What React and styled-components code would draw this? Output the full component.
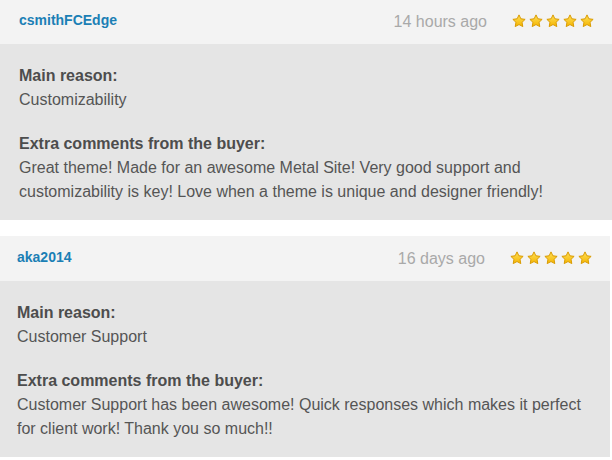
import React from "react";
import styled, { createGlobalStyle } from "styled-components";

const GlobalStyle = createGlobalStyle`
  html, body {
    margin: 0;
    padding: 0;
    background: #ffffff;
    font-family: "Liberation Sans", Arial, sans-serif;
  }
`;

const Page = styled.div`
  width: 612px;
  display: flex;
  flex-direction: column;
  gap: 16px;
  margin-top: -1px;
`;

const Card = styled.div`
  display: flex;
  flex-direction: column;
  margin-left: ${p => p.shift || 0}px;
  margin-right: ${p => -p.shift || 0}px;
`;

const Header = styled.div`
  height: 45px;
  background: #f3f3f3;
  display: flex;
  align-items: center;
  justify-content: space-between;
  padding: 0 18px 0 19px;
  box-sizing: border-box;
`;

const Author = styled.span`
  font-size: 14px;
  font-weight: bold;
  color: #1b7fb5;
  margin-top: -3px;
`;

const Meta = styled.div`
  display: flex;
  align-items: center;
  gap: 25px;
`;

const Time = styled.span`
  font-size: 16px;
  color: #a9a9a9;
`;

const Stars = styled.div`
  display: flex;
  gap: 3px;
  margin-top: -2px;
`;

const Body = styled.div`
  background: #e5e5e5;
  padding: 20px 19px 16px;
  display: flex;
  flex-direction: column;
  gap: 20px;
`;

const Block = styled.div`
  font-size: 16px;
  line-height: 24px;
  color: #555555;
`;

const Label = styled.div`
  font-weight: bold;
  color: #4d4d4d;
`;

const Star = ({ id }) => (
  <svg width="14" height="14" viewBox="0 0 24 24">
    <defs>
      <linearGradient id={id} x1="0" y1="0" x2="0" y2="1">
        <stop offset="0" stopColor="#ffe15a" />
        <stop offset="1" stopColor="#f4b400" />
      </linearGradient>
    </defs>
    <path
      d="M12 1.5l3.2 6.7 7.3 1-5.3 5.1 1.3 7.3L12 18.1l-6.5 3.5 1.3-7.3L1.5 9.2l7.3-1z"
      fill={`url(#${id})`}
      stroke="#d99a00"
      strokeWidth="1.7"
      strokeLinejoin="round"
    />
  </svg>
);

const reviews = [
  {
    author: "csmithFCEdge",
    time: "14 hours ago",
    reason: "Customizability",
    comment:
      "Great theme! Made for an awesome Metal Site! Very good support and customizability is key! Love when a theme is unique and designer friendly!",
    shift: 0,
  },
  {
    author: "aka2014",
    time: "16 days ago",
    reason: "Customer Support",
    comment:
      "Customer Support has been awesome! Quick responses which makes it perfect for client work! Thank you so much!!",
    shift: -2,
  },
];

export default function App() {
  return (
    <>
      <GlobalStyle />
      <Page>
        {reviews.map((r, i) => (
          <Card key={r.author} shift={r.shift}>
            <Header>
              <Author>{r.author}</Author>
              <Meta>
                <Time>{r.time}</Time>
                <Stars>
                  {[0, 1, 2, 3, 4].map(s => (
                    <Star key={s} id={`star-${i}-${s}`} />
                  ))}
                </Stars>
              </Meta>
            </Header>
            <Body>
              <Block>
                <Label>Main reason:</Label>
                {r.reason}
              </Block>
              <Block>
                <Label>Extra comments from the buyer:</Label>
                {r.comment}
              </Block>
            </Body>
          </Card>
        ))}
      </Page>
    </>
  );
}
